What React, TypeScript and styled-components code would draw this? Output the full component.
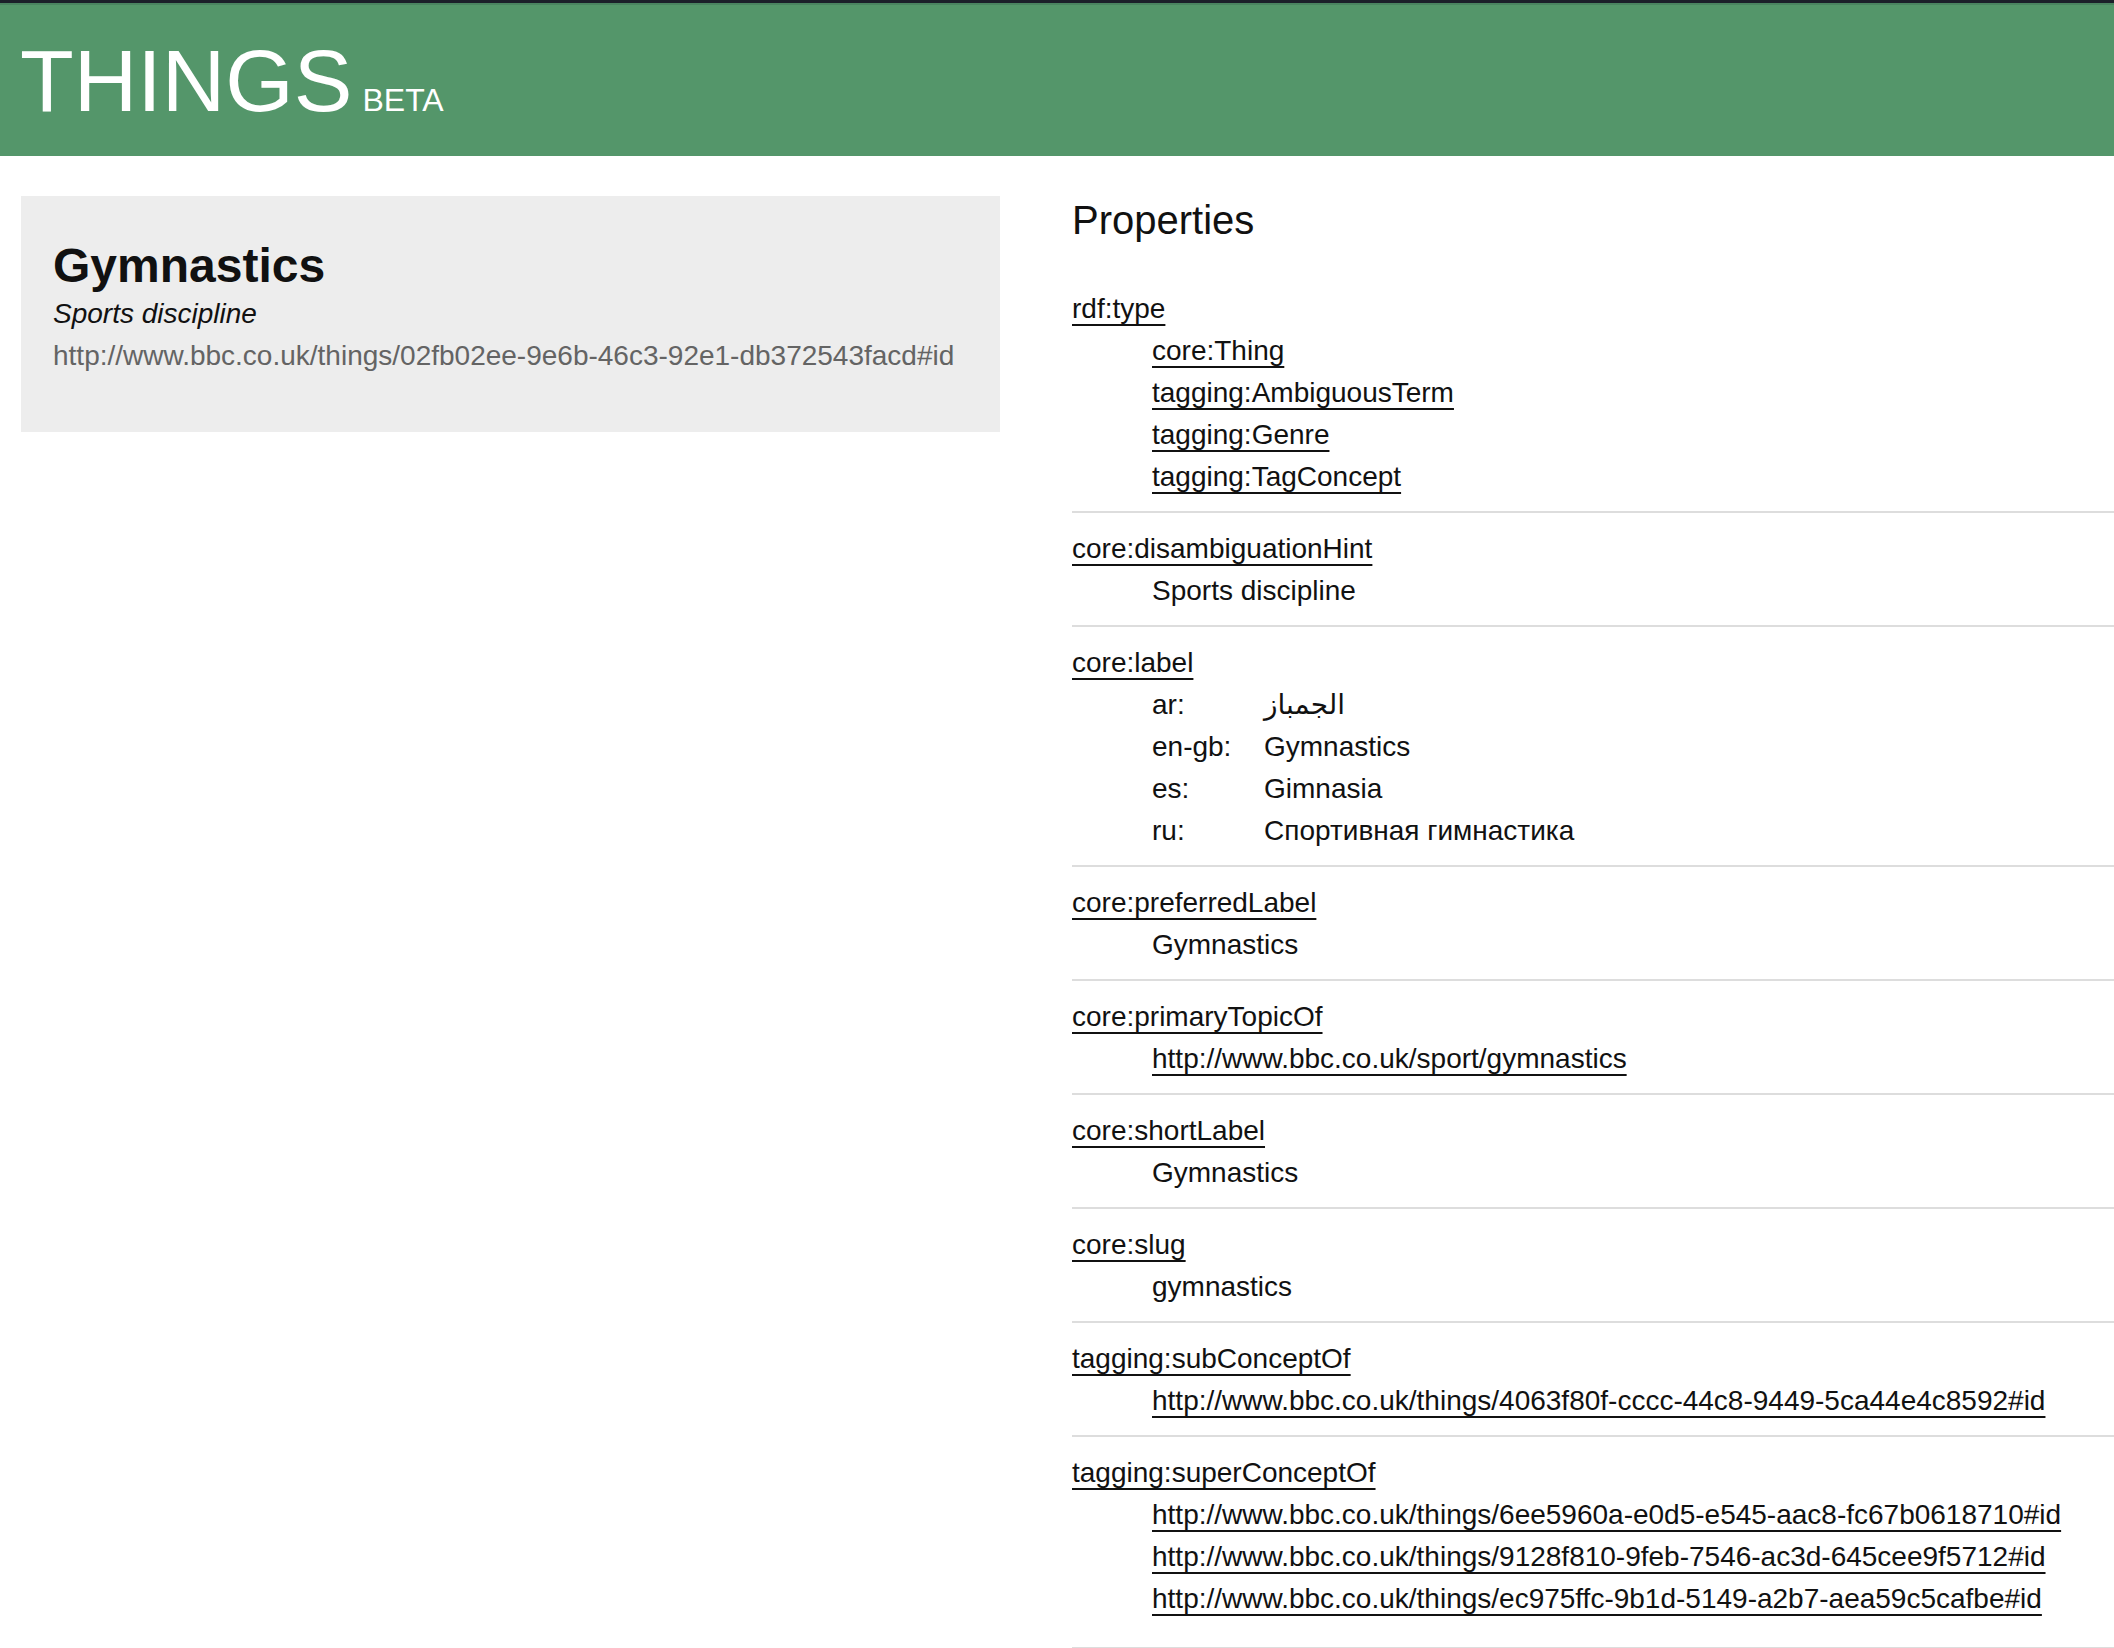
import React from 'react';
import styled, { createGlobalStyle } from 'styled-components';

const GlobalStyle = createGlobalStyle`
    html, body {
        margin: 0;
        padding: 0;
        background: #ffffff;
    }
    body {
        font-family: "Liberation Sans", Arial, "DejaVu Sans", sans-serif;
        color: #111111;
        font-size: 28px;
        line-height: 42px;
    }
`;

const Header = styled.header`
    box-sizing: border-box;
    height: 156px;
    background: #54966a;
    border-top: 3px solid #1b1f29;
    box-shadow: inset 0 2px 0 #4a8460;
    padding: 34px 20px 0;
    display: flex;
    align-items: baseline;
    gap: 10px;
    color: #ffffff;
`;

const Logo = styled.span`
    font-size: 88px;
    line-height: 88px;
    font-weight: 400;
`;

const Beta = styled.span`
    font-size: 32px;
    line-height: 32px;
`;

const Main = styled.main`
    display: grid;
    grid-template-columns: 979px 1fr;
    column-gap: 72px;
    padding: 40px 0 0 21px;
    align-items: start;
`;

const Card = styled.section`
    background: #ededed;
    padding: 35px 32px 55px;
`;

const Title = styled.h1`
    margin: 8px 0 0;
    font-size: 48px;
    line-height: 54px;
    font-weight: 700;
`;

const Hint = styled.div`
    font-style: italic;
`;

const Uri = styled.div`
    color: #646464;
`;

const Heading = styled.h2`
    margin: 0 0 29px;
    font-size: 40px;
    line-height: 48px;
    font-weight: 400;
`;

const PropList = styled.dl`
    margin: 0;
`;

const Prop = styled.div<{ $last?: boolean }>`
    padding: 15px 0 ${(p) => (p.$last ? 27 : 13)}px;
    border-bottom: 2px solid #dddddd;
`;

const Key = styled.dt`
    margin: 0;
`;

const Value = styled.dd`
    margin: 0 0 0 80px;
`;

const Link = styled.a`
    color: #111111;
    text-decoration: underline;
    text-decoration-thickness: 2px;
    text-underline-offset: 6px;
`;

const LangRow = styled.dd`
    margin: 0 0 0 80px;
    display: grid;
    grid-template-columns: 112px 1fr;
`;

type PropDef = {
    key: string;
    values?: { text: string; link?: boolean }[];
    langs?: [string, string][];
};

const props: PropDef[] = [
    {
        key: 'rdf:type',
        values: [
            { text: 'core:Thing', link: true },
            { text: 'tagging:AmbiguousTerm', link: true },
            { text: 'tagging:Genre', link: true },
            { text: 'tagging:TagConcept', link: true },
        ],
    },
    { key: 'core:disambiguationHint', values: [{ text: 'Sports discipline' }] },
    {
        key: 'core:label',
        langs: [
            ['ar:', 'الجمباز'],
            ['en-gb:', 'Gymnastics'],
            ['es:', 'Gimnasia'],
            ['ru:', 'Спортивная гимнастика'],
        ],
    },
    { key: 'core:preferredLabel', values: [{ text: 'Gymnastics' }] },
    {
        key: 'core:primaryTopicOf',
        values: [{ text: 'http://www.bbc.co.uk/sport/gymnastics', link: true }],
    },
    { key: 'core:shortLabel', values: [{ text: 'Gymnastics' }] },
    { key: 'core:slug', values: [{ text: 'gymnastics' }] },
    {
        key: 'tagging:subConceptOf',
        values: [{ text: 'http://www.bbc.co.uk/things/4063f80f-cccc-44c8-9449-5ca44e4c8592#id', link: true }],
    },
    {
        key: 'tagging:superConceptOf',
        values: [
            { text: 'http://www.bbc.co.uk/things/6ee5960a-e0d5-e545-aac8-fc67b0618710#id', link: true },
            { text: 'http://www.bbc.co.uk/things/9128f810-9feb-7546-ac3d-645cee9f5712#id', link: true },
            { text: 'http://www.bbc.co.uk/things/ec975ffc-9b1d-5149-a2b7-aea59c5cafbe#id', link: true },
        ],
    },
];

export default function App() {
    return (
        <>
            <GlobalStyle />
            <Header>
                <Logo>THINGS</Logo>
                <Beta>BETA</Beta>
            </Header>
            <Main>
                <Card>
                    <Title>Gymnastics</Title>
                    <Hint>Sports discipline</Hint>
                    <Uri>http://www.bbc.co.uk/things/02fb02ee-9e6b-46c3-92e1-db372543facd#id</Uri>
                </Card>
                <div>
                    <Heading>Properties</Heading>
                    <PropList>
                        {props.map((p, i) => (
                            <Prop key={p.key} $last={i === props.length - 1}>
                                <Key>
                                    <Link href="#">{p.key}</Link>
                                </Key>
                                {p.values?.map((v) => (
                                    <Value key={v.text}>
                                        {v.link ? <Link href="#">{v.text}</Link> : v.text}
                                    </Value>
                                ))}
                                {p.langs?.map(([lang, text]) => (
                                    <LangRow key={lang}>
                                        <span>{lang}</span>
                                        <span>{text}</span>
                                    </LangRow>
                                ))}
                            </Prop>
                        ))}
                    </PropList>
                </div>
            </Main>
        </>
    );
}
